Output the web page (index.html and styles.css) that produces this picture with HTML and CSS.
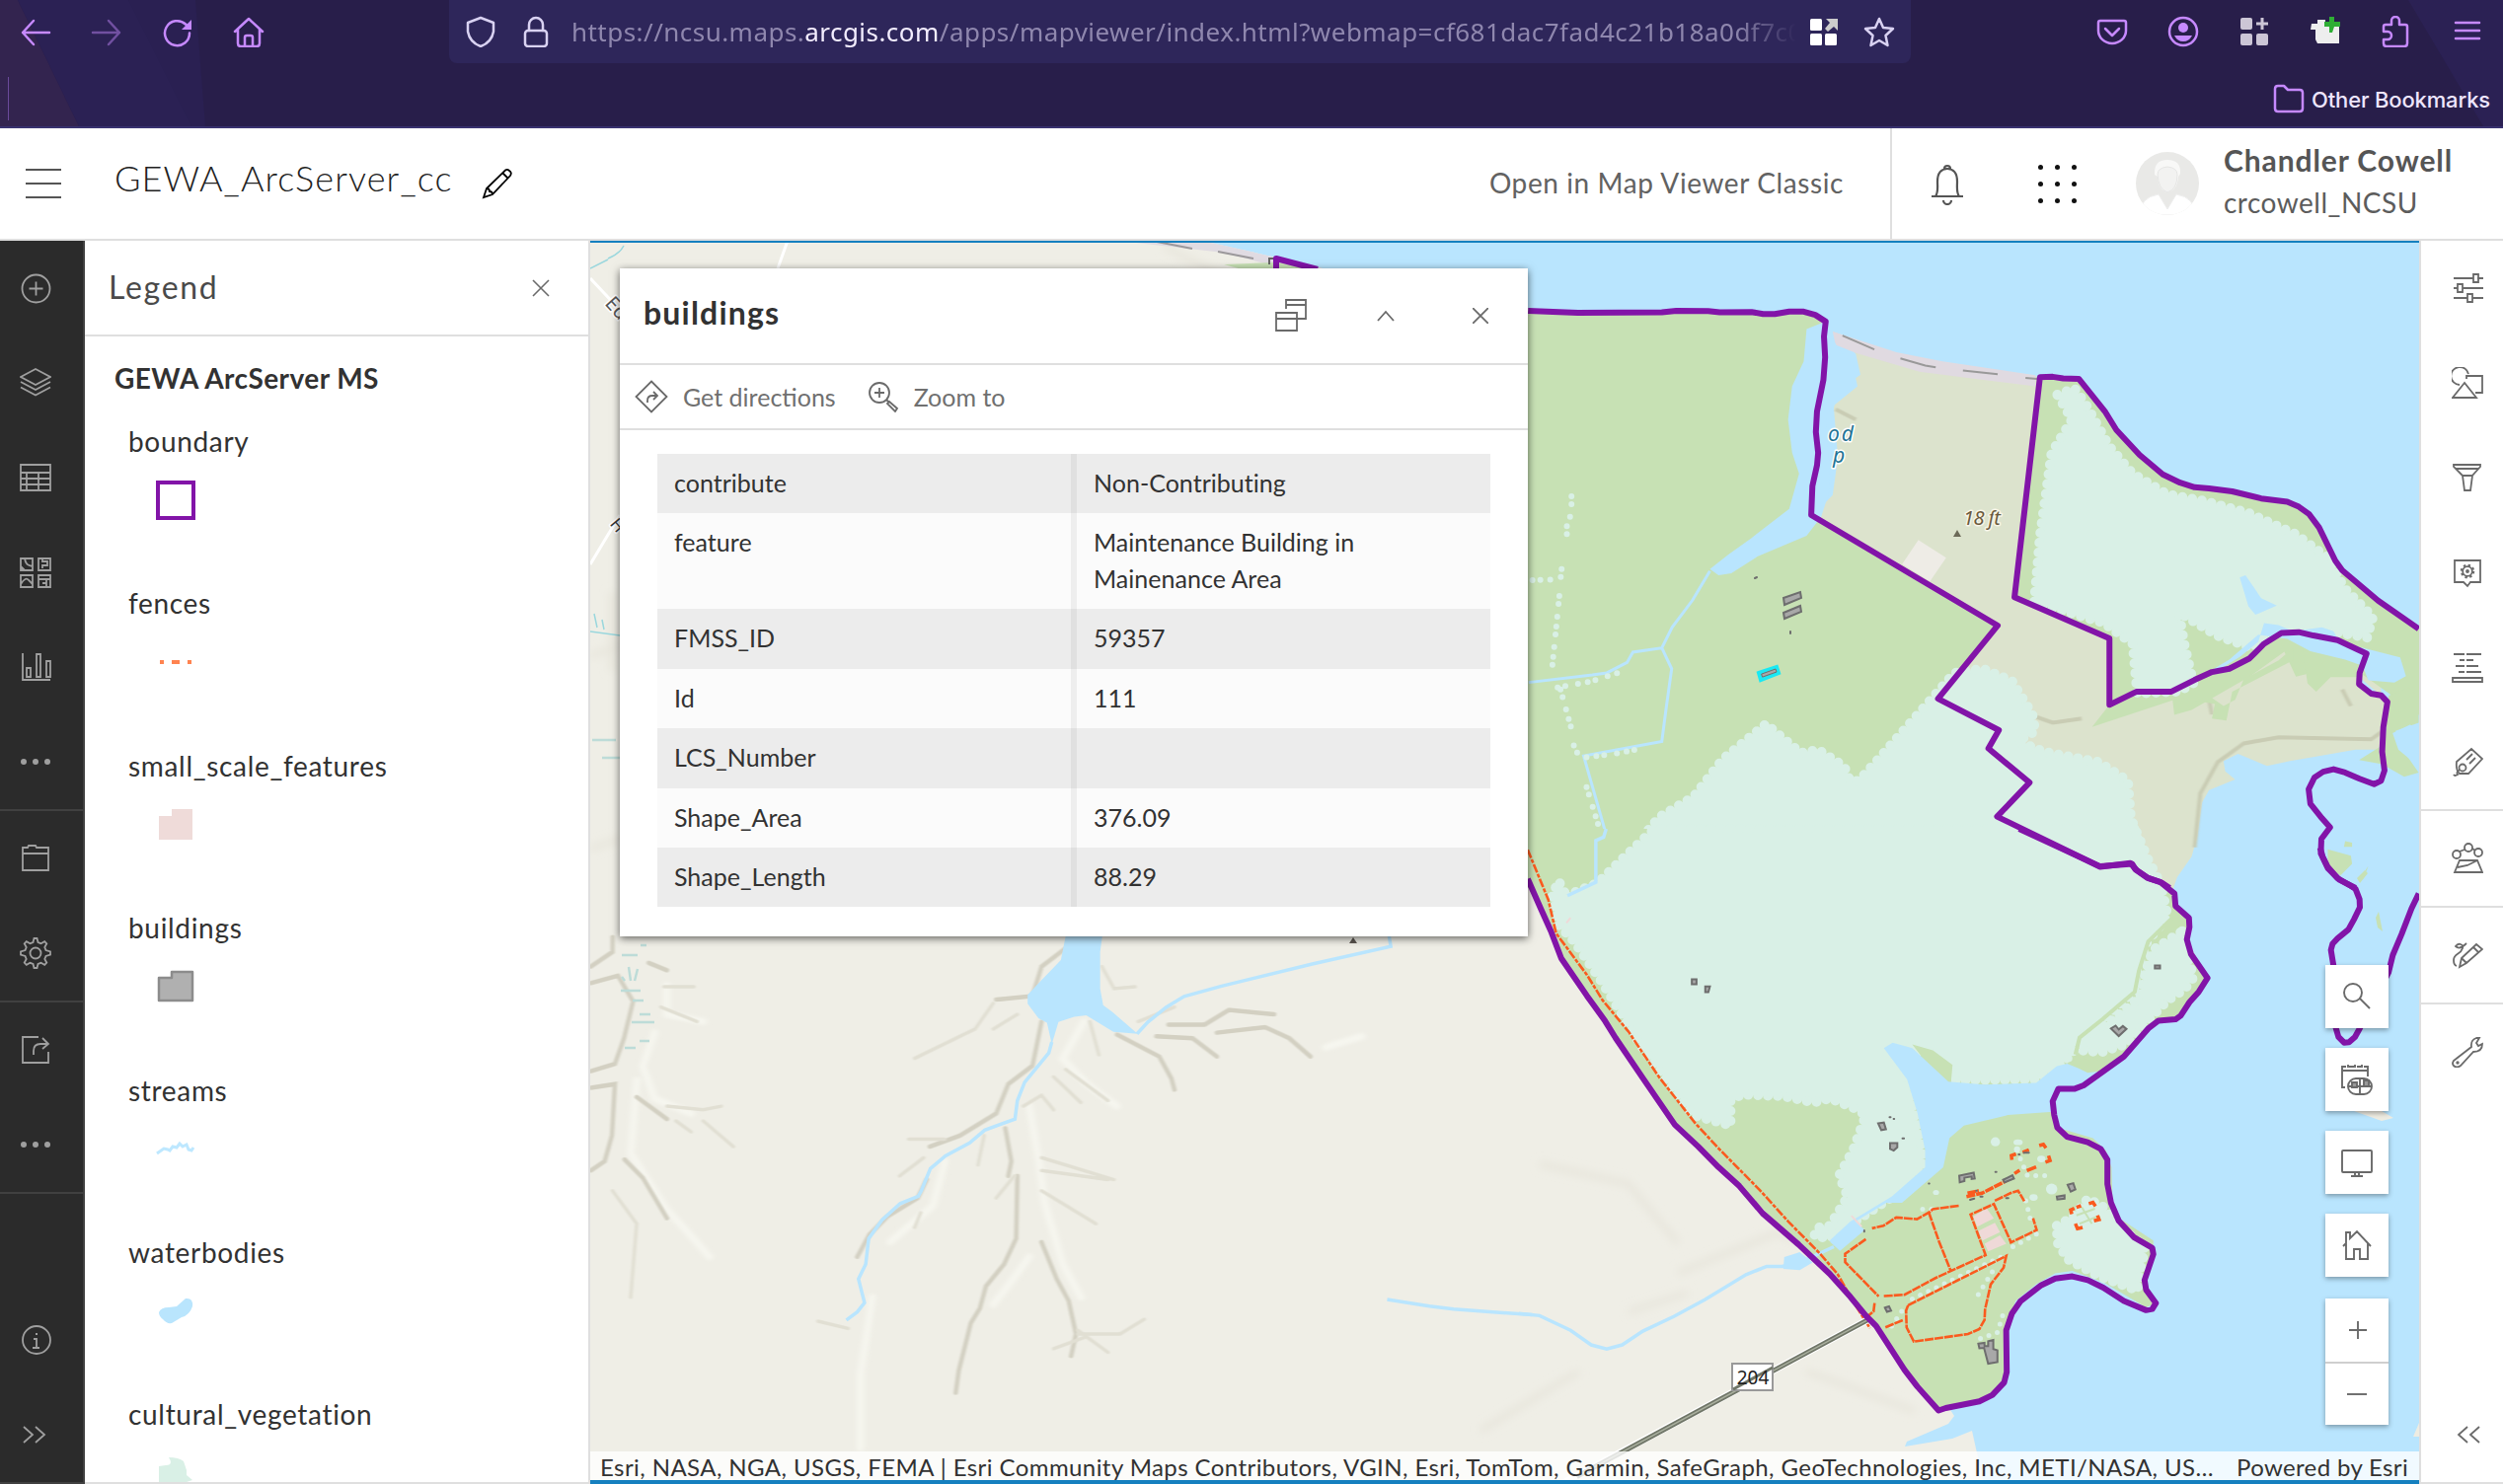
FILE: index.html
```html
<!DOCTYPE html>
<html lang="en">
<head>
<meta charset="utf-8">
<title>GEWA_ArcServer_cc - Map Viewer</title>
<link rel="stylesheet" href="styles.css">
</head>
<body>
<header class="chrome">
  <svg class="chrome-art" width="2536" height="128" viewBox="0 0 2536 128">
    <path fill="#33244f" d="M0 0h18l62 128H0z"/><path fill="#2b2154" d="M18 0h112l50 60 14 68H80z"/><path fill="#2a2052" d="M130 0h68l10 128h-14z"/><path fill="#2b2154" d="M2440 0h96v128h-20z"/>
  </svg>
  <div class="toolbar">
    <nav class="tools">
      <svg class="ic" viewBox="0 0 32 32"><path d="M30 17H3M14 5 3 17l11 12"/></svg>
      <svg class="ic dim" viewBox="0 0 32 32"><path d="M2 17h27M18 5l11 12-11 12"/></svg>
      <svg class="ic" viewBox="0 0 32 32"><path d="M28 17.500A12.500 12.500 0 1 1 24 8.500l4 4"/><path class="solid" d="M30 4v10H20z"/></svg>
      <svg class="ic" viewBox="0 0 32 32"><path d="M2 16 16 3l14 13M5 14v14q0 3 3 3h16q3 0 3-3V14M12 31v-9q0-2 2-2h4q2 0 2 2v9"/></svg>
    </nav>
    <div class="urlbar">
      <svg class="ic pale" viewBox="0 0 32 32"><path d="M16 2 29 7v9q-2 11-13 15Q5 27 3 16V7z"/></svg>
      <svg class="ic pale" viewBox="0 0 32 32"><rect x="5" y="15" width="22" height="16" rx="3"/><path d="M9 15V9a7 7 0 0 1 14 0v6"/></svg>
      <div class="url">https://ncsu.maps.<b>arcgis.com</b>/apps/mapviewer/index.html?webmap=cf681dac7fad4c21b18a0df7c0</div>
      <svg class="ic fillw" viewBox="0 0 32 32"><rect x="2" y="3" width="12" height="12" rx="1.500"/><rect x="2" y="18" width="12" height="12" rx="1.500"/><rect x="17" y="18" width="12" height="12" rx="1.500"/><path d="M18 3h12v12l-4-4-6 5-3-3 5-6z" fill="#ccc"/></svg>
      <svg class="ic pale" viewBox="0 0 32 32"><path d="m16 3 4 9 10 1-7.500 7 2 10L16 25l-8.500 5 2-10L2 13l10-1z"/></svg>
    </div>
    <nav class="tools">
      <svg class="ic" viewBox="0 0 32 32"><path d="M4 5h24q2 0 2 2v8a14 13 0 0 1-28 0V7q0-2 2-2zM9 13l7 7 7-7"/></svg>
      <svg class="ic" viewBox="0 0 32 32"><circle cx="16" cy="16" r="14"/><circle class="solid" cx="16" cy="12" r="5"/><path class="solid" d="M7 20h18q-3 6-9 6t-9-6z"/></svg>
      <svg class="ic gray" viewBox="0 0 32 32"><rect x="2" y="2" width="12" height="12" rx="2"/><rect x="2" y="18" width="12" height="12" rx="2"/><rect x="18" y="18" width="12" height="12" rx="2"/><path d="M22.500 2h3v4.500H30v3h-4.500V14h-3V9.500H18v-3h4.500z"/></svg>
      <svg class="ic plain" viewBox="0 0 32 32"><path fill="#eee" d="M2 8h6V4h8v4h14v20H8l-2-4V14H1z"/><path fill="#2fae35" d="M20 1h5v5h6v5h-6l-2 6h-3v-6h-5V6h5z"/></svg>
      <svg class="ic" viewBox="0 0 32 32"><path d="M3 14V11q0-2 2-2h6V5a4 4 0 0 1 8 0v4h6q2 0 2 2v17q0 3-3 3H6q-3 0-3-3v-4h4a4 4 0 0 0 0-8H3z"/></svg>
      <svg class="ic" viewBox="0 0 32 32"><path d="M4 7h24M4 15h24M4 23h24"/></svg>
    </nav>
  </div>
  <div class="bookmarks"><span class="bm-line"></span>
    <svg class="ic" viewBox="0 0 32 32"><path d="M2 26V6q0-3 3-3h6l4 4h12q3 0 3 3v16q0 3-3 3H5q-3 0-3-3z"/></svg>
    <span class="bm-text">Other Bookmarks</span></div>
</header>

<header class="apphead">
  <div class="burger"><i></i><i></i><i></i></div>
  <h1>GEWA_ArcServer_cc</h1>
  <svg class="pencil" viewBox="0 0 32 32"><path d="M2 30 5 21 24 2.500Q26 1 28 3q3 2 1 5L11 27zM21 5l6 6M5 21q3 0 3 3 3 0 3 3"/></svg>
  <span class="classic">Open in Map Viewer Classic</span>
  <div class="user">
    <svg class="bell" viewBox="0 0 36 44"><path d="M2 35h32M6 35c3-4 2-9 2-15C8 11 12 7 18 7s10 4 10 13c0 6-1 11 2 15M15 7a3 3 0 1 1 6 0M14 39a4 4 0 0 0 8 0"/></svg>
    <div class="dots"><i></i><i></i><i></i><i></i><i></i><i></i><i></i><i></i><i></i></div>
    <svg class="avatar" viewBox="0 0 64 64"><defs><clipPath id="av"><circle cx="32" cy="32" r="32"/></clipPath></defs><g clip-path="url(#av)"><path fill="#e9e9e7" d="M0 0h64v64H0z"/><path fill="#f8f8f7" d="M19 23q-1-15 13-15 14 0 13 14l-2 3q-1 14-11 16-9-2-10-16z"/><path fill="#fff" stroke="#eee" d="M4 64q0-18 19-21l9 15 9-15q19 3 19 21z"/><path fill="#f2f2f1" stroke="#e5e5e4" d="M22 23q0-7 10-8 10 1 10 8 0 15-10 18-9-3-10-18z"/></g></svg>
    <div class="names"><b>Chandler Cowell</b><span>crcowell_NCSU</span></div>
  </div>
</header>

<main class="work">
  <aside class="rail dark">
    <div class="group">
      <svg viewBox="0 0 32 32"><circle cx="16.500" cy="16.500" r="14"/><path d="M16.500 9.500v14M9.500 16.500h14"/></svg>
      <svg viewBox="0 0 32 32"><path d="m1 10 15-8 15 8-15 8zM1 15l15 8 15-8M1 20.500l15 8 15-8"/></svg>
      <svg viewBox="0 0 32 32"><path d="M1 3h30v26H1zM1 11h30M1 17h30M1 23h30M7 11v18M19 11v18"/></svg>
      <svg viewBox="0 0 32 32"><path d="M1 2h12v12H1zM19 2h12v12H19zM1 19h12v12H1zM19 19h12v12H19zM5 2c1 6 3 7 8 8M1 10l4 4M23 2v3h5v4h-5v3M1 28q5-8 8-4l4 4M19 23h12M27 23v8M27 27h-4"/></svg>
      <svg viewBox="0 0 32 32"><path d="M3 2v27h28M7 17h4v9H7zM17 3h4v23h-4zM27 10h4v16h-4z"/></svg>
      <svg class="dotic" viewBox="0 0 32 32"><circle cx="4" cy="16" r="3"/><circle cx="16" cy="16" r="3"/><circle cx="28" cy="16" r="3"/></svg>
    </div>
    <div class="group">
      <svg viewBox="0 0 32 32"><path d="M3 28V5h5l1-2h7l1 2h12v23zM3 11h26"/></svg>
      <svg viewBox="0 0 32 32"><circle cx="16" cy="16" r="5.500"/><path d="m13.500 5 1-4h3l1 4 3 1.200 3.700-2 2.100 2.100-2 3.700L26.500 13l4.500 1.500v3L26.500 19l-1.200 3 2 3.700-2.100 2.100-3.700-2-3 1.200-1 4h-3l-1-4-3-1.200-3.700 2-2.100-2.100 2-3.700L5.500 19 1 17.500v-3L5.500 13l1.200-3-2-3.700 2.100-2.100 3.700 2z"/></svg>
    </div>
    <div class="group">
      <svg viewBox="0 0 32 32"><path d="M19 3H3v26h26V18M14 21v-4q0-7 7-7h8M23 4l6 6-6 5"/></svg>
      <svg class="dotic" viewBox="0 0 32 32"><circle cx="4" cy="16" r="3"/><circle cx="16" cy="16" r="3"/><circle cx="28" cy="16" r="3"/></svg>
    </div>
    <div class="group last">
      <svg viewBox="0 0 32 32"><circle cx="17" cy="16" r="14"/><path d="M14 15h3v9M13 24h7M16 10h2"/></svg>
      <svg viewBox="0 0 32 32"><path d="m4 8 9 8-9 8M16 8l9 8-9 8"/></svg>
    </div>
  </aside>

  <section class="legend">
    <div class="legend-head"><h2>Legend</h2><svg class="close" viewBox="0 0 16 16"><path d="m0 0 16 16M16 0 0 16"/></svg></div>
    <h3>GEWA ArcServer MS</h3>
    <div class="item"><span>boundary</span><svg viewBox="0 0 48 48"><path d="M6 6h36v36H6z" fill="#fff" stroke="#8214a8" stroke-width="4"/></svg></div>
    <div class="item"><span>fences</span><svg viewBox="0 0 48 48"><path d="M8 24h4M20 24h8M36 24h4" stroke="#ff8350" stroke-width="4"/></svg></div>
    <div class="item"><span>small_scale_features</span><svg viewBox="0 0 48 48"><path d="M7 15h13V8h21v31H7z" fill="#efdbd9"/></svg></div>
    <div class="item"><span>buildings</span><svg viewBox="0 0 48 48"><path d="M7 15h13V9h21v29H7z" fill="#b0b0b0" stroke="#8c8c8c" stroke-width="2.500" stroke-linejoin="round"/></svg></div>
    <div class="item"><span>streams</span><svg viewBox="0 0 48 48"><path d="m5 28 7-5 4 1 2 1 3-4 4 1 3-4 3 3 4-2 2 5 3 1 2-3" fill="none" stroke="#bee8ff" stroke-width="3"/></svg></div>
    <div class="item"><span>waterbodies</span><svg viewBox="0 0 48 48"><path d="M7 25q2-5 10-5l8-1 9-8q8-1 7 8-3 9-11 11l-10 6q-5 1-9-4-4-3-4-7z" fill="#b9e5fd"/></svg></div>
    <div class="item"><span>cultural_vegetation</span><svg viewBox="0 0 48 48"><path d="M7 48V17l7-1q8 0 3-8 10 0 15 4l3 9v5l6 5-6 2v17z" fill="#d9f0e6"/></svg></div>
  </section>

  <section class="mapwrap">
    <svg class="map" width="1853" height="1260" viewBox="598 244 1853 1260">
      <defs>
        <filter id="soft" x="-10%" y="-10%" width="120%" height="120%"><feGaussianBlur stdDeviation="1.500"/></filter>
        <filter id="vsoft" x="-10%" y="-10%" width="120%" height="120%"><feGaussianBlur stdDeviation="4"/></filter>
      </defs>
      <path fill="#efeee6" d="M598 244h620l45 10 77 18 209 40v450L1980 1435l-6 8-42 18-2 5 48-8 20-8 12 54H598z"/>
      <!-- hill shading on the western land -->
      <g transform="translate(590 920) scale(.6122 .3724)" fill="none" stroke-linecap="round" class="ns">
        <g stroke="#f6f6ef" stroke-width="7" filter="url(#vsoft)"><path d="M120 340 100 430l20 90 60 40M90 470l-10 200 60 150 70 130M140 210v80l60 20M830 310l-35 100 40 70 50 60M740 540l15 140 10 120 30 170 30 90M600 690l-20 120-70 100M480 1060l-20 210v200M740 950l-60 130M1290 350l-60 30"/></g>
        <g stroke="#d3d0c2" stroke-width="4.500" filter="url(#soft)"><path d="M50 80v40L14 160M14 205l45-20 25 70-15 100-15 70-40 20M14 490l40-10-5 140-12 70-23 25M800 110l-40 50-15 80-60 10M760 310l-15 120-40 50-20 80-60 60-50 30M570 740l-15 50-50 50-30 50-20 60M700 600l10 90-5 40M720 730l-2 170-20 70-30 60-10 60-15 40-20 130-5 60M760 910l25 100 20 60 12 90-8 60M885 345l70 60 20 60 5 30M970 318h60l40-40 75 12M950 350l60 5 40 50M1050 340l80-15 40 30 35 50M70 685l30 50 40 110M90 515l50 60M110 150l30 20"/></g>
        <g stroke="#e1dfd3" stroke-width="3.500" filter="url(#soft)"><path d="M680 260l-30 70-100 80M680 330l40-40M840 310l15 90M780 460l45 70M800 440l70 85M730 540l30-30 20 40M760 680l120 60M760 715l110 25M760 770l90 90M665 620l-10 80M715 730l-30 60M540 630h60M525 730l40-50M550 870l10-40M860 160l20 60 35-5M920 310l60-40M820 1160h70l40-40M820 1150l50 60M780 1200l50-30M390 1125l50 20M80 1060l10-200-40-90M135 215h50M130 270l60 40M140 540l60 10 30-10M155 580l25 30M200 580l50 70"/></g>
      </g>
      <g fill="none" stroke="#e7e5db" stroke-width="6" filter="url(#vsoft)"><path d="M598 665l30-10M620 600v80M598 860l30-10M1180 250l60 30M1560 1180l90 20 50 60M1700 1290l100-40 60 20M1830 1390l110 40M1650 1330l60-20M1500 1450l100-60"/></g>
      <g fill="none" stroke="#fff" stroke-width="3"><path d="M798 244l-10 28M598 282l30 32M598 572l30-50"/></g>
      <g fill="none" stroke="#9ad7dd" stroke-width="1.500"><path d="M598 272l18-9M616 262q12-5 16-13M598 640l30 4M602 622l3 14M610 628l2 10"/></g>
      <g fill="none" stroke="#bddcd8" stroke-width="2.500"><path d="M630 968h16M629 1004h20M641 1014h11M648 1028h11M640 1036h23M648 1055h10M633 1062h11M649 958h6M600 750h24M610 768h18M630 990l3 4M637 980l2 14M646 982l-3 12"/></g>
      <!-- beach north of the popup -->
      <path fill="#e0dbe2" d="M1133 244h85l45 10 77 18h-40l-60-16z"/><path fill="none" stroke="#9b989b" stroke-width="2" d="M1172 245l36 7M1234 255l36 7"/>
      <path fill="#c7e1b4" d="M1240 268l52-2 30 4v4h-60z"/>
      <path fill="none" stroke="#666" stroke-width="2" d="M1286 268v-6h6"/>
      <g transform="translate(590 920) scale(.6122 .3724)" class="ns" stroke="none">
        <path fill="#b9e5fe" d="M802 60h60l-5 60v100l5 45 15 18 42 60-40-5-45-45-20 4-26 14-11 60-8-58-14-12-18-40v-24l20-35 35-60z"/>
        <path fill="none" stroke="#b9e5fe" stroke-width="3.500" d="M1335 75l3 30-130 48-150 60-62 28-30 30-30 40-18 32M777 365l-5 30-40 80-12 50-4 50-50 30-25 35-40 35-25 35-15 60-5 15-30 20-30 45-22 50-5 70-12 40 10 65-12 25-18 22M1332 1066l70 18 40 8 130 16"/>
      </g>
      <path fill="#5c5650" d="m1371 950-4 6h8z"/>

      <!-- northern part of the park -->
      <g transform="translate(1540 240) scale(.5867 .4209)" class="ns">
        <path fill="#c7e1b4" d="M0 178H270L400 181l90-1 38 24-6 100-20 366 323 266-103 176 105 76-18 44 71 82-56 82 178 121 120 51H0z"/>
        <path fill="#dce3cd" d="M540 228l110 57 150 31 100 22-46 530 164 99v160l47-32 80-5 95-57 65-60 70-40 76 12 35 35 1 120 11 20-11 60-3 55h-41l-113 27-40 12-50-29-25 17 3 25 17 20-45 25-12 30-8 80-10 50-25 50-7 28h-40l-84-51-178-121 56-82-71-82 18-44-105-76 103-176-322-266 35-50 9-90-7-120 7-40 39-40-8-50-26-40z"/>
        <path fill="#e0dae1" d="M540 228l110 50 80 22 160 33v27l-100-17-100-18-110-45-35-20z"/>
        <path fill="none" stroke="#999" stroke-width="2" d="M557 238l55 33M657 293l43 17 18 4M765 322l60 9M873 340l20 2"/>
        <g fill="none" stroke="#c9ccb4" stroke-width="4" filter="url(#soft)"><path d="M545 415l35 25M1165 1470l10-130 30-75 45-45 60-15 160 5 20-20M880 1150l40 20 50-10M1185 1080l10 70M1420 1090l15 40"/></g>
        <path fill="#eeece6" d="M688 730l48 43-28 57-48-42z"/>
        <path fill="#b9e5fe" d="M528 204l-33 18-5 78-20 60-7 80 7 80 12 50-17 85-65 70-40 40-32 35 15 15 22-5 45-40 85-50 25-45 14-60 1-60-7-90 3-40 12-20 40-45-8-50-25-40-16-40z"/>
        <path fill="none" stroke="#b9e5fe" stroke-width="3" d="M328 805l-30 70-35 65-18 50-50 10-10 25-35 25-25 5-110 18M245 990l17 50-10 100-7 75-135 35 40 195-18 10v100l-25 15"/>
        <path fill="#c7e1b4" d="M1552 944l-132-141-57-135-38-30-160-32-55-31-80-107-65-126-67-4-44 530 164 99v160l47-32 60-4 5 60 30-12 100-80 60-60 20 60 30-10 30-50 30 30 130 130 10-40-8-60 60 30 30-30v-40z"/>
        <path fill="#c7e1b4" d="M988 1180l30-53 47-32h60l40-25 30 0v40l20 20 20-15 15-50 60-45 25-30 0 30-105 75-10 70-25-5 5-35-60-15zM1350 975l110 60-5 25h-55l-25 35-15-20zM1500 1105l35-20 17 25v60l-40 20 10 40 30 60-25 10-38-30-40-10 45-40z"/>
        <path class="scallop" d="M928 380l30-15 20 40 20 50 20 50 40 65 60 50 60 15 80 30 80 50 60 60 25 70 50 70-10 50-90-20-60-5-50 50-60-30-65-55 10 80 15 90-25 20-72 5-8-120-50-50-120-50 10-160 20-200 35-80z"/>
        <path fill="#b9e5fe" d="M1243 820l10-5 27 55 27 18-37 22-12-20zM1205 1045l40-35 30-35 10-45 25 5 25 15 50-10 20 10 10 25 55 20 50 18 10 45-20 15-45-5-10-35-30-15-60-20-40-30-50-10-50 60-30 25zM1449 1060l30 35-18-5zM1507 1195l10 40 35 40v-90l-15-10z"/>
        <path class="scallop" d="M130 1568l50-70 60-100 60-50 50-90 75-85 60 70 30-8 45 40 10 35h15l45-70 120-190 50-10 50 30 35 80 5 40-30 25 45 25 95 25 50 45 5 90 30 100 25 68z"/>
        <g fill="none" stroke="#d9f0e6" stroke-width="6" stroke-linecap="round" stroke-dasharray="0 8 0 13 0 10"><path d="M89 625v40l-8 30v40M72 800l-2 25-55 2M68 865l-5 70-8 110M65 1085l60-15 55-25M70 1090l18 90M93 1225l10 30 60-10 55-15M115 1325l20 90"/></g>
        <path fill="#c7e1b4" d="M1395 1475l40 15 2 20-20 28-22-20zM1448 1550l17-35-8 30zM1425 1455l12 4v10h-14z"/>
      </g>

      <!-- southern part of the park -->
      <g transform="translate(1540 840) scale(.523 .4235)" class="ns">
        <path fill="#c7e1b4" d="M0 0H967L1124 90L1186 84L1240 127L1268 155L1270 185L1296 213L1292 265L1332 357L1297 415L1270 456L1237 459L1170 545L1092 614L1043 622L1032 652L1041 715L1110 740L1135 770L1146 810L1148 890L1165 935L1227 985L1227 1018L1210 1080L1232 1135L1213 1145L1130 1085L1070 1058L1037 1064L1000 1090L960 1130L942 1200L943 1300L938 1325L890 1370L811 1392L770 1335L690 1190L600 1065L425 855L300 708L240 600L130 400L80 310L40 190L0 80z"/>
        <path class="scallop" d="M90 160L150 130L200 70L260 0H1190L1215 95L1245 150L1255 210L1215 270L1195 340L1190 390L1130 455L1080 500L1070 540L1040 570L1000 600L840 602L830 570L760 522L722 518L710 530L750 600L765 680L780 770L780 810L735 870L680 915L600 980L570 975L575 955L600 950L635 880L618 830L645 770L670 685L650 670L600 645L570 655L510 640L430 636L408 650L408 710L335 685L235 520L155 360L105 270L75 230L62 160L75 125z"/>
        <path class="scallop" d="M1283 245l5 40 17 70-18 30-32 25-35 45-45 60-50 20-40-5 10-35 45-30 60-60 12-65 14-50z"/>
        <path fill="none" stroke="#c7e1b4" stroke-width="4" d="M1262 215l-45 55-18 70-8 50-62 65-45 45-8 40"/>
        <path fill="#c7e1b4" d="M760 516L800 530L838 565L835 608L800 580zM1060 560L1085 548L1110 555L1150 550L1092 600L1080 585z"/>
        <path fill="#b9e5fe" d="M705 525l17-13 38 13 70 80 70 7 100-4 40-40 20-6 20 10 20 12 30-5-38 35-49 8-11 30 1 25-88 8-85 25-28 30-12 70-80 85h-30l-60 45 18 20-48 50-18-20-2-5 40-45 80-60 65-70v-40l-15-90-20-80z"/>
        <path fill="none" stroke="#b9e5fe" stroke-width="3.500" d="M608 1000l-60 35-40 12-30 0-40 20-80 60-60 40-60 35-40 33-30 10-30-10-40-35-60-35-40-5M167 0l-5 20-15 8v100l-55 32"/>
        <path fill="#b9e5fe" d="M512 1025l30-12 25 25-25 18-32-3z"/>
        <path class="scallop" d="M1040 950l30-20 30-45 30 20 30 45 50 50-2 20-12 85-75-35-60-40-20-40z"/>
        <g fill="#d9f0e6"><ellipse cx="921" cy="749" rx="9" ry="11"/><ellipse cx="965" cy="750" rx="9" ry="7"/><ellipse cx="963" cy="767" rx="6" ry="7"/><ellipse cx="1030" cy="862" rx="11" ry="13"/><circle cx="995" cy="882" r="8"/><circle cx="806" cy="870" r="6"/><circle cx="1010" cy="790" r="8"/></g>
        <path fill="none" stroke="#d9f0e6" stroke-width="5" stroke-linecap="round" stroke-dasharray="0 9" d="M760 1125l180-105M955 1000l60-40M980 890l10 50M915 1060l-30 60M935 1165l-10 40-45 20M720 1190l25-45M963 770l20 60 40 0M780 910h30"/>
        <path fill="#efd9d8" d="M878 928l26-20 14 24-32 20zM888 962l32-19 10 22-34 20zM900 993l30-20 12 20-35 18z"/>
        <path fill="none" stroke="#efd9d8" stroke-width="2" d="M642 926l20 26M90 225l8-12"/>
        <path fill="none" stroke="#c7e1b4" stroke-width="2" d="M1066 882l10 30M1078 925l36-16M1084 945l36-18M1088 905l20 40"/>
        <g fill="none" stroke="#fa5a1e" stroke-width="2.600" stroke-dasharray="9 1">
          <path d="M15 50l40 120 15 80 60 100 30 60 50 75 60 110 70 110 45 60 80 100 55 75 60 75 35 50 35 75 28 55" stroke-dasharray="9 1.500 4 1.500"/>
          <path d="M850 902l-50 8-5 6-26 18-40-4-25 20-22 6M670 982l-40 35v20l65 82M792 918l20 70 22 68M705 1118l40-3 60-40 97-55-29-97 45-25 31 85 2 7 50-30-7-28M920 890l30-18 15-6 12 25M752 1140l190-118-5 28-25 40-11 60-1 25-10 22-22 12-105 18-14-34-1-40zM708 1193l35-18M687 1135l-2 20-15 15"/>
          <path stroke-width="3.500" d="M865 880l30-8 60-38M867 872l22-6"/>
          <path stroke-width="3.500" stroke-dasharray="none" d="M958 825l10-8M982 818l18-9M953 792l-1-10 9-4M974 774l12-6M1006 758l8-3 5 9M1024 782l3 12-9 4M1069 922l-2-10 7-4M1078 906l9-4M1102 897l8-3 5 9M1119 925l3 10-10 3M1076 945l4 12 10-3"/>
        </g>
        <g class="bld"><path d="M333 360h9v12h-9zM359 377h9l-3 14h-6zM1230 327h10v7h-10zM1145 478l9-7 6 9 8-8 7 7-15 17zM694 705l11-2 4 16-9 2zM717 752h14v10l-7 8-7-4zM852 846l-1-16 28-7 2 14-6 1v-6l-14 3v8zM936 840l18-11 3 8-18 9zM1061 852l11-4 4 15-9 5zM1040 880l15-3v8l-14 2zM888 1232l12-2v8h7v-12l10-3v22l8 3v28l-18 4-8-38-9 1zM707 1146l8-3 4 10-8 3z"/><path d="M716 690h2M724 694h1M741 741h3M792 849h1M921 821h2M966 779h2M976 775h10M942 884h4M667 961v3M872 888l8-3M892 880h4M884 866h1"/></g>
        <path d="M674 1175L80 1568" fill="none" stroke="#fff" stroke-width="7"/><path d="M674 1175L110 1550" fill="none" stroke="#707668" stroke-width="5"/><path d="M674 1175L110 1550" fill="none" stroke="#aab09f" stroke-width="1.500"/>
      </g>

      <!-- park boundary -->
      <g fill="none" stroke="#8214a8" stroke-width="6" stroke-linejoin="round">
        <g transform="translate(1540 240) scale(.5867 .4209)" class="ns">
          <path d="M14 178l86 5 145-1 25-4 55 1 20 3 55-1 20 5h20l25-6h25l20 8 18 16-3 36 2 50-3 55-11 75-2 50 4 50-2 30-8 50-2 70 322 266-103 176 105 76-18 44 71 82-56 82 178 121 52-9 11 17 20 19 23 11 14 13"/>
          <path d="M1552 944l-70-68-62-73-12-23-28-80-17-32-18-18-20-12-45-8-50-17-40-7-25-3-25-11-30-20-40-47-40-60-20-45-45-78-27-1-18-4-22 1-44 530 164 99v160l47-32h60l40-28 30-19 30-8 35-25 25-35 30-26 30-2 25 8 42 11 50 33-12 46-1 27 21 23 17 4 11 16-7 60-2 60 4 45-6 25-12 8-25-13-25-15-20-8-18 6-15 14-10 28 3 35 20 35 14 22-15 28-1 35 12 35 20 28 28 20"/>
        </g>
        <path class="nsp" transform="translate(1540 840) scale(.523 .4235)" d="M967 0l157 90 62-6 6 13 23 20 25 10 28 28 2 30 26 28 1 22-5 30 8 35 32 57-17 33-18 25-17 32-10 9-33 3-20 19-47 67-78 69-17 8h-32l-11 30 3 33 6 30 19 22 40 13 25 16 13 26v58l7 45 15 43 30 40 35 25 2 15-17 62 3 23 19 32-7 14-12 3-43-22-40-32-30-18-30-9-33 5-27 16-40 38-17 30-11 40 1 100-5 25-23 30-25 15-65 16-14 6-41-57-25-40-55-105-20-25-30-45-40-55-60-70-70-75-45-65-40-45-40-50-45-52-60-108-55-100-20-40-35-60-50-90-20-65-20-55-25-70"/>
        <path class="nsp" transform="translate(2300 860) scale(.3333 .4107)" d="M152-2l8 22 15 25 30 28 40 19 15 8 12 25 1 20-18 30-17 25-33 22-15 13-5 15 5 25 12 60v80l-2 28 8 22 17 14 15-1 18-13 15-22 87-137 13-43 27-52 30-63 22-37"/>
        <path d="M1293 272v-10l42 11"/>
      </g>
      <g class="bld" stroke-width="2"><path d="M1807 606l17-6 1 6-17 7zM1807 621l17-7 1 6-17 7z"/><path d="M1778 586l2-1M1814 640v2"/><path d="M1782 682l18-6 2 6-18 7z" style="stroke:#19e9f3;stroke-width:4"/><path d="M1785 683l14-5 1 3-14 5z" style="stroke-width:1"/></g>
      <path fill="#eeece2" d="M2385 1126h28l12 7-12 3zM2451 1442l-6 14h6z"/>
      <path fill="#c7e1b4" d="M2388 890l8-8 3 3-8 10zM2407 930l3-6 4 20-5-4z"/>
      <path fill="#6c6a58" d="m1983 537-4 7h8z"/>
      <rect x="1755" y="1382" width="41" height="27" fill="#fff" stroke="#999" stroke-width="2"/>
      <path d="M1756 1408l40-22" stroke="#707668" stroke-width="3"/>
      <g font-family="Noto Sans, sans-serif" paint-order="stroke" stroke-linejoin="round">
        <text x="1776" y="1403" font-size="19" text-anchor="middle" fill="#222">204</text>
        <text font-size="21" font-style="italic" letter-spacing="2" fill="#1f7395" stroke="#fff" stroke-width="3"><tspan x="1852" y="447">od</tspan><tspan x="1857" y="469">p</tspan></text>
        <text x="1989" y="532" font-size="20" font-style="italic" textLength="38" fill="#6a593d" stroke="#f7f5e8" stroke-width="3">18 ft</text>
        <text x="612" y="308" font-size="20" fill="#555" stroke="#fff" stroke-width="3" transform="rotate(48 612 308)">Ed</text>
        <text x="616" y="538" font-size="17" fill="#333" stroke="#fff" stroke-width="3" transform="rotate(50 624 536)">H</text>
      </g>
    </svg>

    <article class="popup">
      <div class="pop-head"><h2>buildings</h2>
        <svg width="34" height="34" viewBox="0 0 34 34"><path d="M12 10V1h20v19h-9M12 6h20M2 14h21v18H2zM2 20h21"/></svg>
        <svg width="18" height="12" viewBox="0 0 18 12"><path d="m1 11 8-9 8 9"/></svg>
        <svg width="16" height="16" viewBox="0 0 16 16"><path d="m0 0 16 16M16 0 0 16"/></svg>
      </div>
      <div class="pop-actions">
        <svg width="34" height="34" viewBox="0 0 34 34"><path d="M17 1.500 32.500 17 17 32.500 1.500 17zM13 23v-2q0-5 5-5h4M19 12l4 4-4 4"/></svg><span class="act1">Get directions</span>
        <svg width="32" height="32" viewBox="0 0 32 32"><circle cx="12" cy="12" r="10"/><path d="M12 7v10M7 12h10M19 19l3 3M22 21l8 7-2 3-8-8z"/></svg><span>Zoom to</span>
      </div>
      <div class="fields">
        <div class="f"><span>contribute</span><span>Non-Contributing</span></div>
        <div class="f two"><span>feature</span><span>Maintenance Building in<br>Mainenance Area</span></div>
        <div class="f"><span>FMSS_ID</span><span>59357</span></div>
        <div class="f"><span>Id</span><span>111</span></div>
        <div class="f"><span>LCS_Number</span><span></span></div>
        <div class="f"><span>Shape_Area</span><span>376.09</span></div>
        <div class="f"><span>Shape_Length</span><span>88.29</span></div>
      </div>
    </article>

    <div class="mapbtns">
      <div class="mb"><svg viewBox="0 0 32 32"><circle cx="12" cy="12" r="9"/><path d="m19 18 10 10"/></svg></div>
      <div class="mb"><svg viewBox="0 0 32 32"><path d="M4 24H1V3h4M8 3h5M16 3h4M23 3h4v10M1 7h26M7 1v3M14 1v3M21 1v3"/><rect x="7" y="15" width="24" height="16" rx="8" fill="#fff"/><path d="M19 15v16M8 23h23"/><path d="M11 19h5v5h-5zM23 17h5v6h-5z" fill="#999"/></svg></div>
      <div class="mb"><svg viewBox="0 0 32 32"><rect x="1" y="4" width="30" height="22" rx="1"/><path d="M14 26v4M18 26v4M10 30h12"/></svg></div>
      <div class="mb"><svg viewBox="0 0 32 32"><path d="m2 17 3-3V3h4v6l7-7 14 15M5 14v16h8V20h6v10h8V14"/></svg></div>
      <div class="zoom"><div><svg viewBox="0 0 32 32"><path d="M17 7v18M8 16h18"/></svg></div><div><svg viewBox="0 0 32 32"><path d="M6 16h20"/></svg></div></div>
    </div>
    <div class="attr"><span class="src">Esri, NASA, NGA, USGS, FEMA | Esri Community Maps Contributors, VGIN, Esri, TomTom, Garmin, SafeGraph, GeoTechnologies, Inc, METI/NASA, US…</span><span class="pow">Powered by Esri</span></div>
  </section>

  <aside class="rail light">
    <div class="group">
      <svg viewBox="0 0 32 32"><path d="M2 6h20M26 6h6M22 2h5v8h-5zM2 16h4M11 16h21M6 12h5v8H6zM2 26h14M21 26h11M16 22h5v8h-5z"/></svg>
      <svg viewBox="0 0 32 32"><path d="M8 18A9 9 0 1 1 17 7M15 12V9h16v17h-7M13 16 1 31h24z"/></svg>
      <svg viewBox="0 0 32 32"><path d="M2 3h27v2l-8 9-2 15h-6l-2-15-9-9zM4 7h23M11 14h10"/></svg>
      <svg viewBox="0 0 32 32"><path d="M3 4h26v22H19l-3 4-4-4H3z"/><circle cx="16" cy="15" r="6" stroke-dasharray="2.300 2.400" stroke-width="2.500"/><circle cx="16" cy="15" r="4.800"/><circle cx="16" cy="15" r="1"/></svg>
      <svg viewBox="0 0 32 32"><path d="M2 3h11M15 3h15M8 9h5M15 9h7M4 15h9M15 15h12M7 21h6M15 21h15M1 27h30v4H1z"/></svg>
      <svg viewBox="0 0 32 32"><path d="M5 16 20 3l11 10-14 15H8q-4-3-3-12zM15 14l6-6M18 18l6-6"/><circle cx="11" cy="22" r="3.500"/><path d="M8 24q-4 3-2 5-3 2-4 0"/></svg>
    </div>
    <div class="group"><svg viewBox="0 0 32 32"><circle cx="5" cy="12" r="4"/><circle cx="17" cy="5" r="4"/><circle cx="27" cy="10" r="4"/><path d="m8 9 5-2M21 6l3 2M8 18h18l5 12H3zM6 25l10-2 10-5"/></svg></div>
    <div class="group"><svg viewBox="0 0 32 32"><path d="m8 28 2-9L25 5l6 5-16 14zM10 19l5 5M22 8l5 5M15 4C9 10 6 9 4 7c3-4 8-2 7 2C9 16 2 14 2 21q0 5 3 6"/></svg></div>
    <div class="group none"><svg viewBox="0 0 32 32"><path d="M2 25 20 11q-1-7 5-9l3 0-3 5 2 3 4-2q0 8-9 8L9 30q-4 3-7 0-2-2 0-5z"/><circle cx="6" cy="27" r=".8"/></svg></div>
    <div class="group last"><svg viewBox="0 0 32 32"><path d="m16 8-9 8 9 8M28 8l-9 8 9 8"/></svg></div>
  </aside>
</main>
</body>
</html>
```

FILE: styles.css
```css
* { box-sizing: border-box; }
body { margin: 0; width: 2536px; height: 1504px; overflow: hidden; background: #fff; font-family: Lato, sans-serif; color: #323232; display: flex; flex-direction: column; }
h1, h2, h3 { margin: 0; font-weight: 400; white-space: nowrap; }
svg { display: block; flex: none; fill: none; }
i { display: block; }

/* browser chrome */
.chrome { height: 130px; background: #281e4a; border-bottom: 2px solid #38316f; position: relative; flex: none; }
.chrome-art { position: absolute; left: 0; top: 0; }
.toolbar { position: relative; height: 64px; display: flex; justify-content: space-between; padding: 0 20px; }
.tools { display: flex; gap: 40px; align-items: center; }
.ic { width: 32px; height: 32px; stroke: #c689ff; stroke-width: 2.5; stroke-linecap: round; stroke-linejoin: round; }
.ic .solid { fill: #c689ff; stroke: none; }
.ic.dim { opacity: .45; }
.ic.pale { stroke: #d9d2f2; }
.ic.fillw { fill: #fff; stroke: none; }
.ic.gray { fill: #ccc6d6; stroke: none; }
.ic.plain { stroke: none; }
.urlbar { width: 1481px; margin-left: 187px; margin-right: auto; background: #2e265a; border-radius: 0 0 8px 8px; display: flex; align-items: center; padding: 0 16px; }
.urlbar .ic + .ic { margin-left: 24px; }
.url { flex: 1; margin: 0 12px 0 20px; overflow: hidden; white-space: nowrap; font: 26px/65px "Noto Sans", sans-serif; color: #8f87ae; height: 64px; letter-spacing: .46px; -webkit-mask-image: linear-gradient(90deg, #000 95%, transparent 100%); mask-image: linear-gradient(90deg, #000 95%, transparent 100%); }
.url b { font-weight: 400; color: #f3edff; }
.bookmarks { position: relative; height: 64px; display: flex; align-items: center; justify-content: flex-end; padding: 8px 13px 0 8px; gap: 7px; }
.bm-line { width: 1px; height: 44px; background: #6a4a9a; margin-right: auto; }
.bm-text { font: 500 22px Inter, sans-serif; color: #eee6ff; letter-spacing: -.15px; padding-top: 2px; }

/* application header */
.apphead { height: 114px; flex: none; display: flex; align-items: center; border-bottom: 2px solid #dfdfdf; }
.burger { width: 36px; margin: 0 54px 0 26px; display: grid; gap: 12px; padding-bottom: 1px; }
.burger i { height: 2px; background: #555; }
h1 { font-size: 36px; font-weight: 300; color: #222; width: 343px; letter-spacing: 1.1px; padding-bottom: 12px; }
.pencil { width: 32px; height: 32px; margin-left: 29px; stroke: #000; stroke-width: 1.8; }
.classic { margin-left: auto; font-size: 28px; color: #626262; letter-spacing: .6px; white-space: nowrap; margin-right: 47px; padding-bottom: 2px; }
.user { width: 621px; height: 112px; border-left: 2px solid #dfdfdf; display: flex; align-items: center; }
.bell { width: 36px; height: 44px; margin-left: 38px; stroke: #555; stroke-width: 2.2; }
.dots { margin-left: 74px; width: 42px; display: grid; grid-template-columns: repeat(3, 5px); gap: 12px; }
.dots i { width: 5px; height: 5px; border-radius: 50%; background: #111; }
.avatar { width: 64px; height: 64px; margin-left: 57px; }
.names { margin-left: 25px; display: grid; gap: 7px; padding-bottom: 6px; line-height: 36px; white-space: nowrap; }
.names b { font-size: 30px; color: #555; letter-spacing: .9px; }
.names span { font-size: 28px; color: #5c5c5c; letter-spacing: .5px; }

/* work area */
.work { flex: 1; display: flex; min-height: 0; }
.rail { flex: none; display: flex; flex-direction: column; }
.dark { width: 86px; background: #2b2b2b; border-right: 2px solid #404040; border-bottom: 2px solid #404040; }
.light { width: 85px; border-left: 2px solid #dfdfdf; border-bottom: 2px solid #dfdfdf; background: #fff; }
.group { border-bottom: 2px solid #404040; }
.light .group { border-color: #dfdfdf; }
.group.none, .group.last, .light .group.last { border: 0; }
.last { margin-top: auto; }
.group svg { width: 32px; height: 32px; margin: 32px 20px 64px; stroke: #9f9f9f; stroke-width: 1.8; }
.group svg:last-child { margin-bottom: 32px; }
.light .group svg { margin-left: 31px; stroke: #6a6a6a; }
.group .dotic { fill: #9f9f9f; stroke: none; }
.legend { width: 512px; flex: none; border-right: 2px solid #dfdfdf; border-bottom: 2px solid #dfdfdf; overflow: hidden; }
.legend-head { height: 97px; border-bottom: 2px solid #dfdfdf; display: flex; align-items: center; justify-content: space-between; padding: 0 40px 0 24px; }
h2 { font-size: 32px; color: #4a4a4a; letter-spacing: 1.7px; padding-bottom: 2px; }
.close { width: 16px; height: 16px; stroke: #6a6a6a; stroke-width: 1.6; overflow: visible; }
h3 { font-size: 28px; font-weight: 700; color: #323232; height: 82px; padding: 23px 0 0 30px; line-height: 38px; letter-spacing: .45px; }
.item { height: 164.4px; padding: 6px 0 0 44px; font-size: 28px; line-height: 37px; letter-spacing: .68px; white-space: nowrap; }
.item span { display: block; }
.item svg { width: 48px; height: 48px; margin: 17px 0 0 24px; }

/* map */
.mapwrap { flex: 1; position: relative; overflow: hidden; background: #b9e5fe; border-top: 2px solid #1580bf; border-bottom: 4px solid #1580bf; }
.map { position: absolute; left: 0; top: -2px; }
.ns *, .nsp { vector-effect: non-scaling-stroke; }
.scallop { fill: #d9f0e6; stroke: #d9f0e6; stroke-width: 10; stroke-dasharray: 0 10; stroke-linecap: round; }
.bld { fill: #a8a8a8; stroke: #6e6e6e; stroke-width: 2; stroke-linecap: round; }
.popup { position: absolute; left: 30px; top: 26px; width: 920px; height: 677px; background: #fff; box-shadow: 0 2px 8px rgba(0,0,0,.6); }
.popup svg { stroke: #6a6a6a; stroke-width: 1.8; }
.pop-head { height: 98px; border-bottom: 2px solid #dfdfdf; display: flex; align-items: center; padding: 0 40px 0 24px; }
.pop-head h2 { font-size: 32px; font-weight: 700; color: #323232; margin-right: auto; letter-spacing: 1.2px; padding-bottom: 8px; }
.pop-head svg + svg { margin-left: 70px; }
.pop-head svg + svg + svg { margin-left: 79px; }
.pop-actions { height: 66px; border-bottom: 2px solid #dfdfdf; display: flex; align-items: center; padding-left: 15px; font-size: 25px; color: #707070; letter-spacing: 0; }
.pop-actions span { margin-left: 15px; padding-bottom: 1px; }
.pop-actions .act1 { margin-right: 32px; }
.fields { margin: 24px 38px; font-size: 25px; letter-spacing: .02px; line-height: 37px; }
.f { height: 60.4px; display: grid; grid-template-columns: 425px 1fr; background: #fbfbfb; }
.f.two { height: 97px; }
.f:nth-child(odd) { background: #ececec; }
.f span { padding: 11px 17px 10px; }
.f span:first-child { border-right: 6px solid rgba(0,0,0,.05); }
.mapbtns { position: absolute; right: 31px; top: 732px; display: grid; gap: 20px; }
.mb, .zoom div { width: 64px; height: 64px; display: grid; place-items: center; background: #fff; }
.mb, .zoom { box-shadow: 0 2px 5px rgba(0,0,0,.35); }
.mapbtns svg { width: 32px; height: 32px; stroke: #6a6a6a; stroke-width: 1.9; }
.zoom { margin-top: 2px; background: #fff; }
.zoom div + div { border-top: 2px solid #cfcfcf; }
.attr { position: absolute; left: 0; right: 0; bottom: 0; height: 29px; background: rgba(255,255,255,.8); display: flex; justify-content: space-between; font-size: 24px; line-height: 31px; padding: 0 11px 0 10px; white-space: nowrap; letter-spacing: .42px; }
.pow { letter-spacing: .35px; }
```
